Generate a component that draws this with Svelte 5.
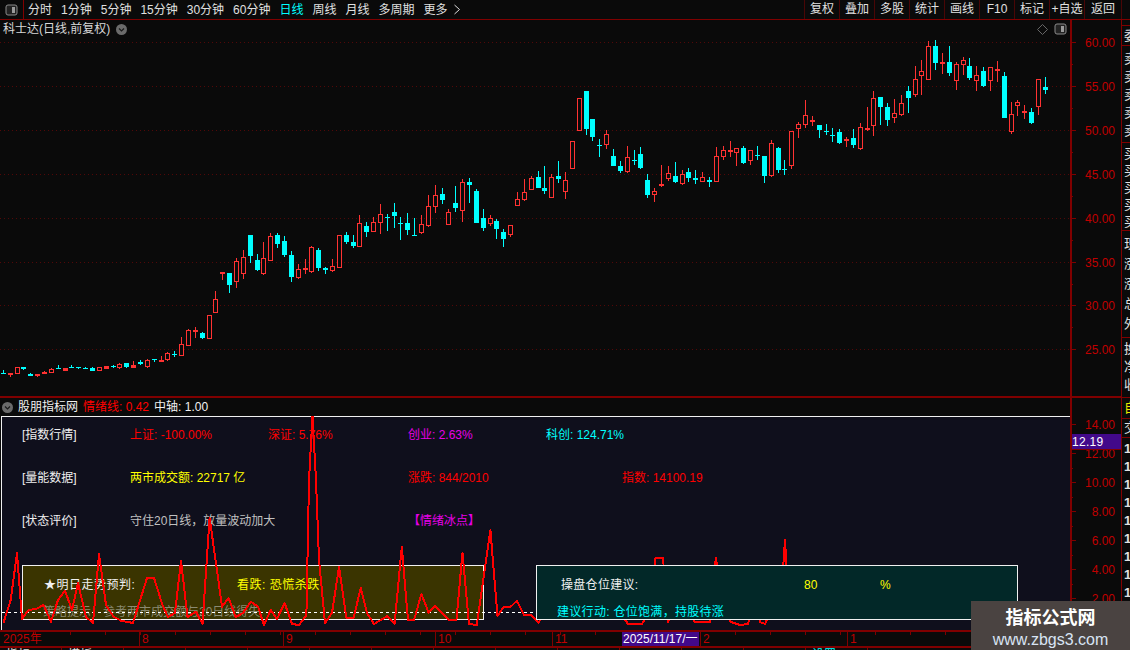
<script>
  const left = ['分时','1分钟','5分钟','15分钟','30分钟','60分钟','日线','周线','月线','多周期'];
  const right = ['复权','叠加','多股','统计','画线','F10','标记','+自选','返回'];

  const A = [[0,510,520,522,522],[1,519,519,525,531],[1,502,502,521,521],[0,501,501,506,510],[0,519,521,527,527],[1,522,522,528,531],[1,514,516,522,522],[1,505,508,518,518],[0,495,504,507,507],[1,504,505,512,512],[0,495,501,503,503],[0,501,501,504,508],[0,501,505,507,507],[0,502,504,513,513],[1,502,502,512,512],[1,499,499,506,506],[0,495,497,500,504],[1,490,492,503,507],[0,489,489,501,504],[1,483,495,503,503],[0,480,487,491,496],[1,478,481,500,503],[0,477,477,481,486],[1,468,480,485,485],[1,457,460,479,483],[0,453,461,463,471],[1,411,433,467,467],[1,388,391,437,437],[1,381,391,395,414],[0,396,400,414,417],[1,346,346,416,416],[1,273,298,338,338],[1,216,216,221,240],[0,219,219,255,279],[1,174,184,245,264],[1,150,172,221,237],[0,105,105,168,189],[0,162,180,210,213],[1,126,175,221,225],[1,99,109,182,182],[0,99,105,132,144],[0,108,123,165,171],[0,153,165,231,246],[1,192,208,233,237],[1,177,205,210,222],[1,138,142,216,219],[0,144,150,204,213],[0,201,204,210,222],[1,177,199,212,216],[1,105,105,203,203]];
  const B = [[0,457,465,486,492],[0,465,486,498,504],[1,405,430,500,500],[0,426,438,456,471],[1,411,427,456,456],[1,372,403,428,462],[0,402,411,413,453],[0,369,396,408,444],[0,411,430,432,480],[0,399,429,450,465],[0,414,465,468,468],[1,405,433,459,462],[1,345,379,438,441],[1,315,346,380,399],[0,324,342,360,372],[1,388,397,434,434],[0,318,369,384,396],[1,297,307,392,426],[0,294,306,315,369],[0,327,333,429,429],[0,387,414,444,453],[1,405,415,431,438],[0,417,423,447,477],[0,447,456,477,501],[1,436,436,464,471],[1,336,358,377,377],[1,297,337,360,363],[1,288,295,329,329],[0,273,291,324,324],[0,258,324,333,342],[1,282,292,353,353],[0,243,288,297,309],[1,276,301,335,357],[1,184,184,266,266],[1,55,55,152,152],[0,33,33,147,165],[0,117,117,171,183],[0,177,195,198,231],[1,150,163,196,207],[0,207,228,258,258],[0,243,258,273,279],[1,198,232,275,278],[0,210,240,243,255],[0,201,222,264,267],[0,282,300,345,354],[1,324,334,344,366],[1,255,313,317,321],[1,258,280,296,303],[0,246,288,306,309],[1,270,283,312,315],[0,264,276,294,306]];
  const C = [[0,420,444,449,462],[1,426,442,455,455],[0,441,450,456,471],[1,351,379,455,455],[1,348,361,380,390],[1,333,361,366,381],[1,355,355,368,408],[0,348,354,400,402],[1,361,361,392,405],[0,348,375,378,390],[0,378,378,438,459],[1,330,340,438,441],[0,351,354,420,429],[0,390,417,420,435],[1,304,304,408,417],[1,276,283,296,324],[1,210,256,284,294],[1,258,270,272,288],[0,285,285,300,324],[0,282,303,306,315],[0,294,315,318,336],[0,297,306,339,342],[1,321,328,334,351],[0,297,324,345,354],[1,280,292,357,360],[1,231,294,297,303],[1,183,205,287,318],[0,201,201,231,285],[0,220,231,270,288],[1,207,250,263,279],[1,195,220,255,258],[0,168,183,204,249],[1,108,148,194,201],[1,90,124,137,195],[1,33,49,150,150],[0,30,48,99,120],[1,69,97,100,132],[0,48,96,129,138],[1,96,103,152,180],[1,81,91,104,135],[0,84,108,144,150],[1,108,136,152,183],[0,111,123,168,171],[1,111,112,152,183],[1,93,118,121,156],[0,126,138,264,264],[1,216,253,305,312],[1,210,216,228,258],[1,225,243,247,267],[0,234,246,279,282],[1,148,148,230,255],[0,141,171,180,192]];

  const conv = (rows, y0) => rows.map(([up, h, t, b, l]) => ({
    up, h: Math.round(y0 + h / 3), t: Math.round(y0 + t / 3), b: Math.round(y0 + b / 3), l: Math.round(y0 + l / 3)
  }));
  const candles = [...conv(A, 200), ...conv(B, 80), ...conv(C, 30)].map((c, i) => ({
    ...c, x: Math.round(3.4 + 6.855 * i - 0.5)
  }));

  const priceLabels = ['60.00','55.00','50.00','45.00','40.00','35.00','30.00','25.00'];
  const priceY = (k) => Math.round(42.3 + 43.86 * k);
  const indLabels = ['14.00','12.00','10.00','8.00','6.00','4.00','2.00'];
  const indY = (k) => Math.round(424.3 + 29 * k);

  const line = [[3.5,622.7],[10.7,600],[17,553],[22,619],[28.5,610],[36,609],[43.5,605],[51,621.7],[58,600],[65,590.7],[72,610],[78,583],[86,617],[93,623],[99,554],[106,605],[113.6,616.7],[121,620.7],[133,623],[147,578],[154,578],[162.5,605],[168,617],[175,613],[181,560.7],[187.5,617],[196,611.7],[202.5,624],[209.6,518],[216,563],[222,606.7],[228.6,598],[235.7,617],[243,613],[250.7,601.7],[258,606.7],[264,625],[270.7,610],[277,619],[284.6,603],[292,624],[299,625],[306.4,615],[309,480],[312.5,416],[316,480],[319,560],[325,623],[332,613],[339,567],[346.4,618],[353.6,618],[360.7,588],[367,613],[374,624],[387.5,616],[394.6,624],[401.8,546.7],[408,620],[414,620],[421.4,594],[428.6,612.7],[435,606],[449,620],[456.4,620],[462.5,552.7],[469,624],[476.8,625],[490.4,530],[497.5,616],[503.6,606.7],[510.7,606.7],[517,600.7],[524,615],[531.4,615],[538.6,622.7],[546,610],[560,605],[580,612],[600,606],[620,612],[628,624],[642,624],[650,610],[655.5,558],[663,558],[668,622],[680,600],[695,622],[710,622],[714,570],[716,558],[722,610],[731,622],[740,625],[748,624],[755,600],[760,622],[765,624],[775,600],[782,585],[785,540],[788,590],[795,600],[810,600]]
    .map((p) => p.join(',')).join(' ');

  const months = [[139,'8'],[283,'9'],[435,'10'],[552,'11'],[700,'2'],[847,'1']];
  const dateTicks = Array.from({ length: 31 }, (_, i) => 35 + i * 35);
  const tabs = ['指标','模板','','','','','','','','','','','','设置'];
</script>

<div class="app">
  <header class="top">
    <div class="left-menu">
      <span class="toggle">
        <svg width="13" height="12" viewBox="0 0 13 12"><rect x="1" y="1" width="11" height="10" rx="2" fill="#222" stroke="#8a8a8a"/><rect x="7" y="3" width="3" height="6" fill="#9a9a9a"/></svg>
      </span>
      <nav class="periods">
        {#each left as item}
          <span class:active={item === '日线'}>{item}</span>
        {/each}
        <span class="more">更多<svg width="8" height="11" viewBox="0 0 8 11"><path d="M1.5 1 L6.5 5.5 L1.5 10" fill="none" stroke="#ddd"/></svg></span>
      </nav>
    </div>
    <nav class="tools">
      {#each right as item}
        <span>{item}</span>
      {/each}
    </nav>
  </header>

  <div class="body">
    <div class="main">
      <section class="price">
        <svg class="price-svg" width="1121" height="376" viewBox="0 20 1121 376">
          {#each priceLabels as label, k}
            <line class="grid" x1="0" x2="1070" y1={priceY(k) + 0.5} y2={priceY(k) + 0.5}/>
            <rect class="tick" x="1070" y={priceY(k)} width="6" height="1"/>
            {#if k < 7}
              <rect class="tick" x="1070" y={priceY(k + 0.5)} width="3" height="1"/>
            {/if}
            <text class="axis-label" x="1115" y={priceY(k) + 4.5}>{label}</text>
          {/each}
          <rect class="tick" x="1070" y="20" width="2" height="376"/>
          {#each candles as c}
            {#if c.up}
              <rect class="red" x={c.x} y={c.h} width="1" height={Math.max(c.l - c.h, 1)}/>
              {#if c.b - c.t <= 3}
                <rect class="red" x={c.x - 2} y={c.t} width="5" height={Math.max(c.b - c.t, 2)}/>
              {:else}
                <rect class="hollow" x={c.x - 1.5} y={c.t + 0.5} width="4" height={c.b - c.t - 1}/>
              {/if}
            {:else}
              <rect class="cyan" x={c.x} y={c.h} width="1" height={Math.max(c.l - c.h, 1)}/>
              <rect class="cyan" x={c.x - 2} y={c.t} width="5" height={Math.max(c.b - c.t, 1)}/>
            {/if}
          {/each}
        </svg>
        <div class="title">
          <span>科士达(日线,前复权)</span>
          <svg width="11" height="11" viewBox="0 0 11 11"><circle cx="5.5" cy="5.5" r="5.5" fill="#6b6b6b"/><path d="M3 4.5 L5.5 7 L8 4.5" fill="none" stroke="#1a1a1a" stroke-width="1.2"/></svg>
        </div>
        <div class="corner">
          <svg width="11" height="11" viewBox="0 0 11 11"><path d="M5.5 .5 L10.5 5.5 L5.5 10.5 L.5 5.5 Z" fill="none" stroke="#666"/></svg>
          <svg width="13" height="12" viewBox="0 0 13 12"><rect x="1" y="1" width="11" height="10" rx="2" fill="#222" stroke="#8a8a8a"/><rect x="7" y="3" width="3" height="6" fill="#9a9a9a"/></svg>
        </div>
      </section>

      <section class="indicator">
        <div class="ind-left">
          <div class="ind-head">
            <svg width="11" height="11" viewBox="0 0 11 11"><circle cx="5.5" cy="5.5" r="5.5" fill="#6b6b6b"/><path d="M3 4.5 L5.5 7 L8 4.5" fill="none" stroke="#1a1a1a" stroke-width="1.2"/></svg>
            <span class="w">股朋指标网</span>
            <span class="r">情绪线: 0.42</span>
            <span class="w">中轴: 1.00</span>
          </div>
          <div class="ind-body">
            <div class="board">
              <div class="row">
                <span class="w">[指数行情]</span>
                <span class="r">上证: -100.00%</span>
                <span class="r">深证: 5.76%</span>
                <span class="m">创业: 2.63%</span>
                <span class="c">科创: 124.71%</span>
              </div>
              <div class="row">
                <span class="w">[量能数据]</span>
                <span class="y wide">两市成交额: 22717 亿</span>
                <span class="r narrow">涨跌: 844/2010</span>
                <span class="r index">指数: 14100.19</span>
              </div>
              <div class="row">
                <span class="w">[状态评价]</span>
                <span class="g wide">守住20日线，放量波动加大</span>
                <span class="m ice">【情绪冰点】</span>
              </div>
              <div class="boxes">
                <div class="box forecast">
                  <div class="line-a spaced"><span class="w star">★明日走势预判:</span><span class="y">看跌: 恐慌杀跌</span></div>
                  <div class="tip">策略提示：参考两市成交额与20日线得失</div>
                </div>
                <div class="box position">
                  <div class="line-a"><span class="w hold">操盘仓位建议:</span><span class="y num">80</span><span class="y">%</span></div>
                  <div class="act">建议行动: 仓位饱满，持股待涨</div>
                </div>
              </div>
            </div>
            <svg class="overlay" width="1070" height="214" viewBox="0 416 1070 214">
              <line class="dash" x1="2" x2="536" y1="612.5" y2="612.5"/>
              <polyline class="wave" points={line}/>
            </svg>
          </div>
        </div>
        <svg class="ind-axis" width="51" height="232" viewBox="1070 398 51 232">
          <rect class="tick" x="1070" y="398" width="2" height="232"/>
          {#each indLabels as label, k}
            <rect class="tick" x="1070" y={indY(k)} width="6" height="1"/>
            <rect class="tick" x="1070" y={indY(k + 0.5)} width="3" height="1"/>
            <text class="axis-label" x="1115" y={indY(k) + 4.5}>{label}</text>
          {/each}
          <rect x="1072" y="434" width="49" height="15" fill="#42098a"/>
          <rect class="tick" x="1072" y="449" width="49" height="1"/>
          <text class="badge" x="1072" y="446">12.19</text>
        </svg>
      </section>

      <svg class="dates" width="1121" height="18" viewBox="0 630 1121 18">
        <rect class="tick" x="0" y="630" width="1121" height="2"/>
        <rect class="tick" x="0" y="646" width="1121" height="2"/>
        {#each dateTicks as t}
          <rect class="tick" x={t} y="632" width="1" height="3"/>
        {/each}
        <text class="date-label" x="3" y="643">2025年</text>
        {#each months as [mx, label]}
          <rect class="tick" x={mx} y="632" width="1" height="14"/>
          <text class="date-label" x={mx + 3} y="643">{label}</text>
        {/each}
        <rect x="622" y="632" width="77" height="14" fill="#42098a"/>
        <text class="date-on" x="623" y="643">2025/11/17/一</text>
      </svg>

      <div class="tabs">
        {#each tabs as tab}
          <span>{tab}</span>
        {/each}
      </div>
    </div>

    <aside class="side">
      <div class="cell s1"></div>
      <div class="cell s2">委</div>
      <div class="cell s3">卖<br/>卖<br/>卖<br/>卖<br/>卖</div>
      <div class="cell s4">买<br/>买<br/>买<br/>买<br/>买</div>
      <div class="cell s5">现<br/>涨<br/>涨<br/>总<br/>外</div>
      <div class="cell s6">换<br/>净<br/>收</div>
      <div class="cell s7">自</div>
      <div class="cell s8">交</div>
      <div class="s9">
        {#each [0,1,2,3,4,5,6,7,8,9,10] as n}
          <div>1{n}</div>
        {/each}
      </div>
    </aside>
  </div>

  <div class="mark">
    <strong>指标公式网</strong>
    <span>www.zbgs3.com</span>
  </div>
</div>

<style>
  :global(body) {
    margin: 0;
    background: #0a0a0a;
  }
  .app {
    position: relative;
    width: 1130px;
    height: 650px;
    overflow: hidden;
    background: #0a0a0a;
    color: #e0e0e0;
    font: 12px/1 "Liberation Sans", "Noto Sans CJK SC", sans-serif;
  }
  .top {
    display: flex;
    justify-content: space-between;
    height: 19px;
    box-sizing: content-box;
    border-bottom: 1px solid #800000;
    padding-right: 8px;
  }
  .left-menu, .periods, .tools, .more {
    display: flex;
    align-items: center;
  }
  .toggle {
    display: flex;
    align-items: center;
    justify-content: center;
    box-sizing: border-box;
    width: 24px;
    height: 19px;
    border-right: 1px solid #800000;
  }
  .periods {
    gap: 9px;
    margin-left: 4px;
    color: #e0e0e0;
  }
  .periods .active {
    color: #00ffff;
  }
  .more {
    gap: 5px;
    margin-left: 0;
  }
  .tools span {
    box-sizing: border-box;
    width: 35px;
    height: 19px;
    line-height: 19px;
    text-align: center;
    white-space: nowrap;
    border-left: 1px solid #4a0606;
  }
  .tools span:last-child {
    width: 38px;
    border-right: 1px solid #4a0606;
  }
  .body {
    display: flex;
  }
  .main {
    width: 1121px;
    flex: none;
    border-right: 1px solid #800000;
  }
  .price {
    position: relative;
    height: 378px;
    box-sizing: border-box;
    border-bottom: 2px solid #800000;
  }
  svg {
    display: block;
  }
  .grid {
    stroke: #520808;
    stroke-dasharray: 1 3;
  }
  .tick {
    fill: #800000;
  }
  .axis-label {
    fill: #c00000;
    font-size: 12px;
    text-anchor: end;
  }
  .red { fill: #ff3232; }
  .cyan { fill: #00ffff; }
  .hollow {
    fill: #0a0a0a;
    stroke: #ff3232;
  }
  .title {
    position: absolute;
    left: 3px;
    top: 3px;
    display: flex;
    align-items: center;
    gap: 6px;
    height: 12px;
    color: #d8d8d8;
  }
  .corner {
    position: absolute;
    left: 1037px;
    top: 3px;
    display: flex;
    align-items: center;
    gap: 6px;
  }
  .indicator {
    display: flex;
    height: 232px;
  }
  .ind-left {
    width: 1070px;
    flex: none;
  }
  .ind-head {
    display: flex;
    align-items: center;
    height: 18px;
    padding-left: 2px;
    gap: 5px;
  }
  .ind-head svg {
    margin-right: 0;
  }
  .ind-body {
    position: relative;
    height: 214px;
  }
  .board {
    box-sizing: border-box;
    height: 214px;
    margin-left: 1px;
    padding: 8px 0 0 20px;
    background: #0f0f1c;
    border-top: 1px solid #f0f0f0;
    border-left: 1px solid #f0f0f0;
  }
  .row {
    display: grid;
    grid-template-columns: 108px 138px 140px 138px 140px;
    align-items: center;
    height: 20px;
    margin-bottom: 23px;
    white-space: nowrap;
  }
  .wide { grid-column: 2 / 4; }
  .narrow { grid-column: 4; }
  .index { grid-column: 5; margin-left: 76px; }
  .ice { grid-column: 4; }
  .w { color: #f0f0f0; }
  .r { color: #ff0000; }
  .m { color: #e800e8; }
  .c { color: #00ffff; }
  .y { color: #ffff00; }
  .g { color: #c0c0c0; }
  .boxes {
    display: flex;
    gap: 52px;
    margin-top: 34px;
    margin-left: 0;
  }
  .box {
    box-sizing: border-box;
    height: 55px;
    border: 1px solid #f0f0f0;
    white-space: nowrap;
  }
  .forecast {
    width: 462px;
    background: #3a3400;
  }
  .position {
    position: relative;
    z-index: 2;
    width: 482px;
    background: #022828;
  }
  .line-a {
    display: flex;
    align-items: center;
    height: 14px;
    margin-top: 12px;
  }
  .spaced { letter-spacing: .5px; }
  .star { margin-left: 21px; width: 193px; }
  .hold { margin-left: 24px; width: 243px; letter-spacing: .3px; }
  .num { width: 76px; }
  .tip {
    margin: 14px 0 0 20px;
    color: #8a8a72;
  }
  .act {
    margin: 14px 0 0 20px;
    color: #00ffff;
    letter-spacing: .3px;
  }
  .overlay {
    position: absolute;
    inset: 0;
    z-index: 1;
    pointer-events: none;
  }
  .dash {
    stroke: #fff;
    stroke-dasharray: 3 3;
    shape-rendering: crispEdges;
  }
  .wave {
    fill: none;
    stroke: #ff0000;
    stroke-width: 2;
    stroke-linejoin: round;
    shape-rendering: crispEdges;
  }
  .badge {
    fill: #fff;
    font-size: 12px;
    letter-spacing: .3px;
  }
  .date-label {
    fill: #c00000;
    font-size: 12px;
  }
  .date-on {
    fill: #fff;
    font-size: 12px;
  }
  .tabs {
    display: flex;
    height: 2px;
    overflow: hidden;
  }
  .tabs span {
    box-sizing: border-box;
    width: 62px;
    padding-left: 6px;
    font-size: 12px;
    line-height: 14px;
    border-right: 1px solid #800000;
  }
  .tabs span:last-child {
    color: #00ffff;
  }
  .side {
    width: 8px;
    height: 630px;
    overflow: hidden;
    flex: none;
    color: #e0e0e0;
    font-size: 13px;
    padding-left: 2px;
    box-sizing: border-box;
    white-space: nowrap;
  }
  .cell {
    box-sizing: border-box;
    width: 14px;
    margin-left: -2px;
    padding-left: 2px;
    border-bottom: 1px solid #800000;
    overflow: hidden;
  }
  .s1 { height: 6px; }
  .s2 { height: 20px; line-height: 19px; }
  .s3 { height: 97px; line-height: 18px; padding-top: 4px; }
  .s4 { height: 88px; line-height: 17px; padding-top: 2px; }
  .s5 { height: 107px; line-height: 20px; padding-top: 3px; }
  .s6 { height: 60px; line-height: 18px; padding-top: 2px; }
  .s7 { height: 21px; line-height: 20px; color: #e8e800; }
  .s8 { height: 19px; line-height: 18px; }
  .s9 {
    padding-top: 2px;
    font-weight: 700;
    line-height: 18px;
  }
  .mark {
    position: absolute;
    right: 0;
    bottom: 0;
    z-index: 3;
    display: flex;
    flex-direction: column;
    align-items: center;
    gap: 3px;
    width: 159px;
    height: 49px;
    padding-top: 7px;
    box-sizing: border-box;
    background: #4a4341;
  }
  .mark strong {
    color: #fff;
    font-size: 18px;
    line-height: 20px;
  }
  .mark span {
    color: #d8e4f4;
    font-size: 16px;
    line-height: 17px;
  }
</style>
